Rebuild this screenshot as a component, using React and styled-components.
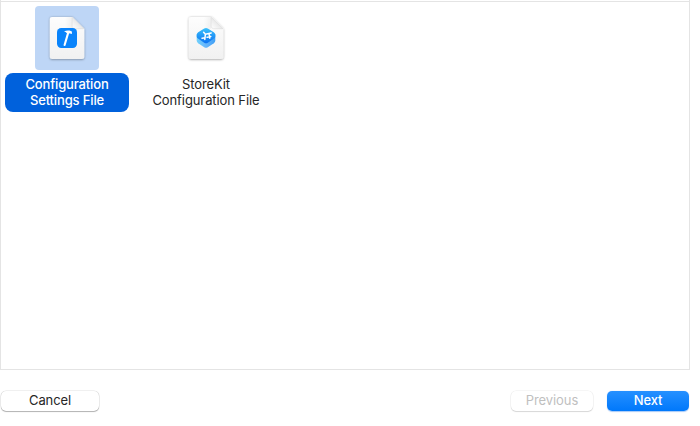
import React from "react";
import styled, { createGlobalStyle } from "styled-components";

const GlobalStyle = createGlobalStyle`
  *, *::before, *::after { box-sizing: border-box; }
  body {
    margin: 0;
    background: #fff;
    overflow: hidden;
    font-family: Inter, "Liberation Sans", sans-serif;
    font-size: 13px;
    -webkit-font-smoothing: antialiased;
  }
`;

const Sheet = styled.main`
  width: 690px;
  height: 426px;
  display: flex;
  flex-direction: column;
`;

const TemplateArea = styled.section`
  height: 370px;
  padding-top: 1px;
  border: 1px solid #e4e4e4;
  border-top: 0;
  background: #fff;
`;

const TemplateGrid = styled.div`
  display: flex;
  gap: 15px;
  padding: 4px 4px 0;
  border-top: 1px solid #e4e4e4;
`;

const Template = styled.div`
  width: 124px;
  display: flex;
  flex-direction: column;
  align-items: center;
  gap: 3px;
`;

const IconTile = styled.div`
  width: 64px;
  height: 64px;
  border-radius: 4px;
  background: ${(p) => (p.$selected ? "#bed6f6" : "transparent")};

  svg { display: block; }
`;

const TemplateName = styled.div`
  width: 124px;
  height: 39px;
  padding-top: 3px;
  border-radius: 8px;
  text-align: center;
  line-height: 16px;
  font-weight: ${(p) => (p.$selected ? 500 : 400)};
  letter-spacing: ${(p) => (p.$selected ? "-0.14px" : "-0.1px")};
  white-space: nowrap;
  color: ${(p) => (p.$selected ? "#fff" : "#262626")};
  background: ${(p) => (p.$selected ? "#0061dc" : "transparent")};
`;

const Footer = styled.footer`
  display: flex;
  align-items: flex-start;
  justify-content: space-between;
  padding: 21px 1px 0;
`;

const ButtonGroup = styled.div`
  display: flex;
  gap: 14px;
`;

const Button = styled.button`
  width: ${(p) => p.$width}px;
  height: 20px;
  padding: 0 0 2px;
  border: 0;
  border-radius: 5px;
  font: inherit;
  line-height: 18px;
  letter-spacing: -0.1px;
  color: #262626;
  background: #fff;
  box-shadow: 0 0 0 0.5px rgba(0, 0, 0, 0.12), 0 0 0.5px rgba(0, 0, 0, 0.12), 0 1px 1px rgba(0, 0, 0, 0.26);

  &:disabled {
    color: #bfbfbf;
    box-shadow: 0 0 0 0.5px rgba(0, 0, 0, 0.07), 0 1px 1px rgba(0, 0, 0, 0.13);
  }
`;

const PrimaryButton = styled(Button)`
  color: #fff;
  font-weight: 500;
  background: linear-gradient(#2690ff, #0078fb);
  box-shadow: 0 0.5px 1px rgba(0, 100, 230, 0.35);
`;

function DocumentIcon({ id, children }) {
  return (
    <svg width="64" height="64" viewBox="0 0 64 64">
      <defs>
        <linearGradient id={`${id}-page`} x1="0" y1="0" x2="0" y2="1">
          <stop offset="0" stopColor="#fdfdfd" />
          <stop offset="1" stopColor="#f1f1f1" />
        </linearGradient>
        <linearGradient id={`${id}-fold`} x1="0" y1="1" x2="1" y2="0">
          <stop offset="0" stopColor="#fff" />
          <stop offset=".5" stopColor="#e9e9e9" />
        </linearGradient>
        <linearGradient id={`${id}-shade`} x1="0" y1="0" x2="1" y2="0">
          <stop offset="0" stopColor="#000" stopOpacity="0" />
          <stop offset="1" stopColor="#000" stopOpacity=".12" />
        </linearGradient>
        <filter id={`${id}-drop`} x="-20%" y="-20%" width="140%" height="140%">
          <feDropShadow dx="0" dy=".5" stdDeviation=".8" floodOpacity=".42" />
        </filter>
      </defs>
      <path
        d="M17 11H37.5L49.3 22.8V50.5Q49.3 53 46.8 53H17.3Q14.8 53 14.8 50.5V13Q14.8 11 17 11Z"
        fill={`url(#${id}-page)`}
        filter={`url(#${id}-drop)`}
      />
      <path d="M30 11H37V22.5H30Z" fill={`url(#${id}-shade)`} opacity=".4" />
      <path d="M37.2 11.2V20.2Q37.2 22.7 39.7 22.7H48.9Z" fill={`url(#${id}-fold)`} stroke="#cfcfcf" strokeWidth=".4" />
      {children}
    </svg>
  );
}

function SettingsFileIcon() {
  return (
    <DocumentIcon id="settings">
      <rect x="22" y="22" width="20" height="20" rx="4.2" fill="#0a84fb" />
      <path d="M33.3 26.4L29.6 39" stroke="#fff" strokeWidth="2.1" strokeLinecap="round" />
      <path d="M29 25.6Q31.5 24 34.6 24.6L36.9 25.6V28L34 27.2L31.6 27Q30.8 25.8 29 25.6Z" fill="#fff" />
    </DocumentIcon>
  );
}

function StoreKitFileIcon() {
  return (
    <DocumentIcon id="storekit">
      <defs>
        <linearGradient id="storekit-top" x1="0" y1="0" x2="0" y2="1">
          <stop offset="0" stopColor="#3cc2fb" />
          <stop offset="1" stopColor="#0b72f2" />
        </linearGradient>
        <linearGradient id="storekit-side" x1="0" y1="0" x2="1" y2="0">
          <stop offset="0" stopColor="#6fd0fb" />
          <stop offset=".5" stopColor="#67b5fb" />
          <stop offset="1" stopColor="#3fa0f5" />
        </linearGradient>
      </defs>
      <path d="M22.7 28H41.3V34.6Q41.3 36.2 39.8 37.2L33.8 41.2Q32 42.3 30.2 41.2L24.2 37.2Q22.7 36.2 22.7 34.6Z" fill="url(#storekit-side)" />
      <path d="M30.2 22.4Q32 21.4 33.8 22.4L39.8 26.3Q41.3 27.4 41.3 29V30.5Q41.3 31.8 40 32.6L33.8 36.7Q32 37.8 30.2 36.7L24 32.6Q22.7 31.8 22.7 30.5V29Q22.7 27.4 24.2 26.3Z" fill="url(#storekit-top)" />
      <path d="M29.6 26.2L31.4 28.2L30.8 33.4M37.2 27L31.4 28.2M35 27.5L35.8 32.2M28 32.2L30.9 31.8M33 31.2L36.8 30.6" fill="none" stroke="#fff" strokeWidth="1.5" strokeLinecap="round" strokeLinejoin="round" />
    </DocumentIcon>
  );
}

export default function App() {
  return (
    <>
      <GlobalStyle />
      <Sheet>
        <TemplateArea>
          <TemplateGrid>
            <Template>
              <IconTile $selected><SettingsFileIcon /></IconTile>
              <TemplateName $selected>Configuration<br />Settings File</TemplateName>
            </Template>
            <Template>
              <IconTile><StoreKitFileIcon /></IconTile>
              <TemplateName>StoreKit<br />Configuration File</TemplateName>
            </Template>
          </TemplateGrid>
        </TemplateArea>
        <Footer>
          <Button $width={98}>Cancel</Button>
          <ButtonGroup>
            <Button $width={82} disabled>Previous</Button>
            <PrimaryButton $width={82}>Next</PrimaryButton>
          </ButtonGroup>
        </Footer>
      </Sheet>
    </>
  );
}
